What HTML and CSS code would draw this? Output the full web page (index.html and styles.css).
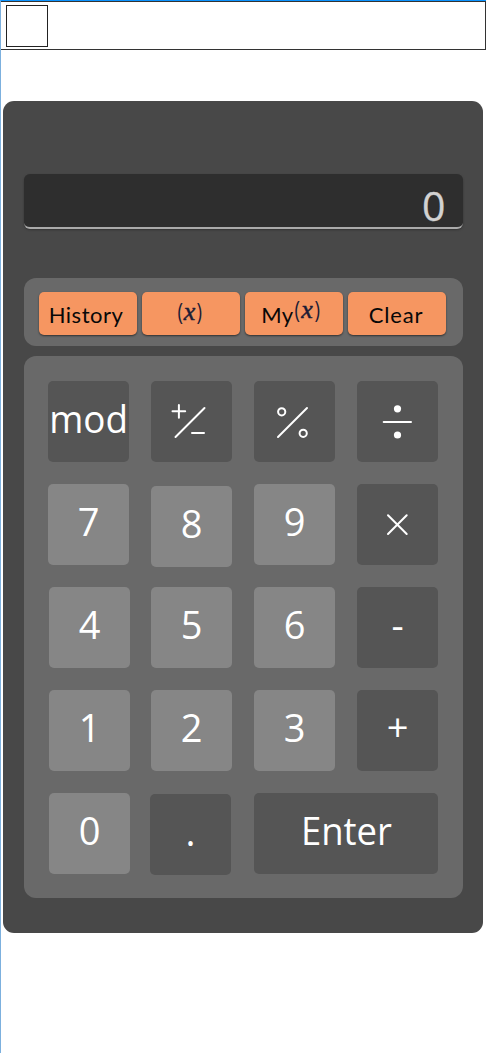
FILE: index.html
```
<!DOCTYPE html>
<html lang="en">
<head>
<meta charset="utf-8">
<title>Calculator</title>
<link rel="stylesheet" href="styles.css">
</head>
<body>
<header class="topbar"><div class="logo"></div></header>
<main class="calculator">
  <div class="display"><span class="value">0</span></div>
  <nav class="actions">
    <button class="action"><span class="label history">History</span></button>
    <button class="action"><span class="fx"><span class="paren">(</span><span class="var">x</span><span class="paren">)</span></span></button>
    <button class="action"><span class="label my">My</span><span class="fx raised"><span class="paren">(</span><span class="var">x</span><span class="paren">)</span></span></button>
    <button class="action"><span class="label clear">Clear</span></button>
  </nav>
  <section class="keypad">
    <button class="key dark"><span class="word mod">mod</span></button>
    <button class="key dark"><svg viewBox="0 0 81 81"><path d="M24.500 56 53.500 27M21.500 30.300H34.200M27.900 24V36.800M41 52H53"/></svg></button>
    <button class="key dark"><svg viewBox="0 0 81 81"><path d="M24 56 53 27"/><circle cx="27.700" cy="30.800" r="3.600"/><circle cx="49.200" cy="52.300" r="3.600"/></svg></button>
    <button class="key dark"><svg viewBox="0 0 81 81"><path d="M26.700 41H54"/><circle class="dot" cx="40.500" cy="27.800" r="3.600"/><circle class="dot" cx="40.500" cy="54" r="3.600"/></svg></button>
    <button class="key">7</button>
    <button class="key lowered">8</button>
    <button class="key">9</button>
    <button class="key dark"><svg viewBox="0 0 81 81"><path d="M31 31.300 49.700 50M49.700 31.300 31 50"/></svg></button>
    <button class="key nudged">4</button>
    <button class="key">5</button>
    <button class="key">6</button>
    <button class="key dark">-</button>
    <button class="key nudged">1</button>
    <button class="key">2</button>
    <button class="key">3</button>
    <button class="key dark plus">+</button>
    <button class="key nudged">0</button>
    <button class="key dark point">.</button>
    <button class="key dark wide"><span class="word enter">Enter</span></button>
  </section>
</main>
</body>
</html>
```
FILE: styles.css
```
* { box-sizing: border-box; }
body {
  margin: 0;
  height: 1053px;
  overflow: hidden;
  background: #fff;
  border-top: 1px solid #0b93ff;
  border-left: 1px solid #7cb0de;
  font-family: "Open Sans", "Noto Sans", sans-serif;
}
.topbar {
  height: 48.500px;
  margin-left: -1px;
  padding: 3px 5px;
  border: 1px solid #333;
  border-left-color: #174a78;
}
.logo { width: 42px; height: 42px; border: 1px solid #222; }
.calculator {
  width: 480.500px;
  height: 832.500px;
  margin: 51px 0 0 1.500px;
  padding: 73.500px 20.500px 0 21.500px;
  border-radius: 11px;
  background: #484848;
}
.display {
  height: 54.500px;
  padding-right: 17px;
  border-bottom: 2px solid #aaa;
  border-radius: 6px;
  background: #2e2e2e;
  box-shadow: 0 1px 2px #2228;
  color: #d2d2d2;
  font-size: 41px;
  line-height: 63px;
  text-align: right;
}
.value { display: block; -webkit-text-stroke: .3px #d2d2d2; }
.actions {
  height: 68px;
  margin-top: 49.500px;
  padding: 14px 17px 0 14.500px;
  display: grid;
  grid-template-columns: repeat(4, 1fr);
  column-gap: 5px;
  border-radius: 12px;
  background: #696969;
}
button { border: 0; padding: 0; margin: 0; font: inherit; }
.action {
  height: 43px;
  display: flex;
  align-items: center;
  justify-content: center;
  border-radius: 5px;
  background: #f69661;
  box-shadow: 0 1px 2px #0008;
  color: #080808;
}
.label { font: 22px/43px Lato, sans-serif; padding-top: 1px; white-space: nowrap; }
.history { letter-spacing: .5px; margin-left: -3px; }
.my { letter-spacing: .3px; margin-left: -6px; }
.clear { letter-spacing: .8px; margin-left: -1px; }
.fx {
  display: flex;
  align-items: center;
  color: #1c1c35;
  line-height: 30px;
  margin: 0 2px 2px 0;
}
.paren {
  width: 6px;
  margin-top: -5px;
  font: 22px/28px "Open Sans", sans-serif;
  transform: scale(.85, 1.100);
}
.var {
  font: italic 26px/26px "Liberation Serif", serif;
  -webkit-text-stroke: .5px #1c1c35;
  margin: -1px 1px 0;
}
.raised { margin: 0 0 6px 1px; }
.keypad {
  height: 541.500px;
  margin-top: 10px;
  padding: 25px 24px 0;
  display: grid;
  grid-template-columns: repeat(4, 81px);
  grid-auto-rows: 81px;
  gap: 22px;
  align-content: start;
  border-radius: 12px;
  background: #696969;
}
.key {
  width: 81px;
  height: 81px;
  padding-bottom: 6px;
  border-radius: 5px;
  background: #868686;
  color: #fff;
  font-size: 38px;
  line-height: 75px;
  text-align: center;
  white-space: nowrap;
}
.dark { background: #555; }
.key svg { display: block; width: 81px; height: 81px; margin-bottom: -6px; fill: none; stroke: #fff; stroke-width: 2; stroke-linecap: round; }
.key .dot { fill: #fff; stroke: none; }
.lowered { margin-top: 2px; }
.nudged { margin-left: 1px; }
.point { margin: 1px 0 0 -1px; }
.plus { padding-bottom: 8px; line-height: 73px; }
.wide { grid-column: span 2; width: 184px; }
.word { display: inline-block; }
.mod { transform: scaleX(.970); margin: 0 -6px; }
.enter { transform: scaleX(.960); }
```
